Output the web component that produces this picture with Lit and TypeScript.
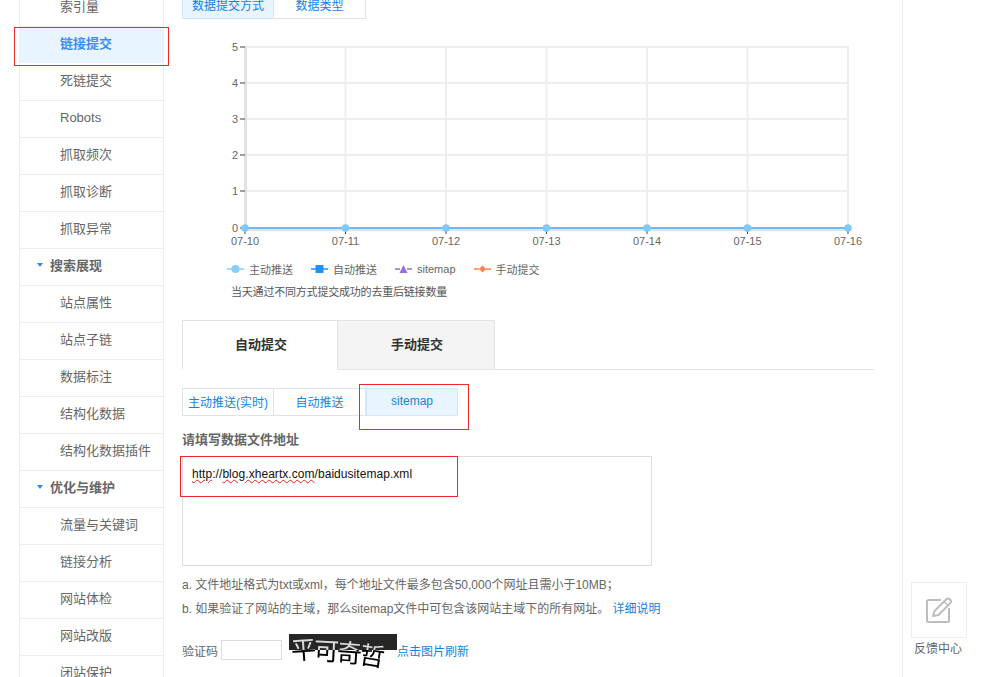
import { LitElement, html, css, svg } from "lit";
import { customElement } from "lit/decorators.js";

type Row = { t: string; kind?: "head" | "active" };
const ROWS: Row[] = [
  { t: "索引量" }, { t: "链接提交", kind: "active" }, { t: "死链提交" }, { t: "Robots" },
  { t: "抓取频次" }, { t: "抓取诊断" }, { t: "抓取异常" }, { t: "搜索展现", kind: "head" },
  { t: "站点属性" }, { t: "站点子链" }, { t: "数据标注" }, { t: "结构化数据" }, { t: "结构化数据插件" },
  { t: "优化与维护", kind: "head" }, { t: "流量与关键词" }, { t: "链接分析" }, { t: "网站体检" },
  { t: "网站改版" }, { t: "闭站保护" },
];
const XS = [245, 345.5, 446, 546.5, 647, 747.5, 848];
const DATES = ["07-10", "07-11", "07-12", "07-13", "07-14", "07-15", "07-16"];
const YS = [47, 83, 119, 155, 191, 228];
const LEGEND = [
  { t: "主动推送", c: "#87cefa", s: "circle" },
  { t: "自动推送", c: "#1e90ff", s: "square" },
  { t: "sitemap", c: "#9370db", s: "triangle" },
  { t: "手动提交", c: "#ff7f50", s: "diamond" },
];

@customElement("app-root")
export class AppRoot extends LitElement {
  static styles = css`
    :host { display: block; width: 982px; height: 677px; overflow: hidden; position: relative; background: #fff;
      font-family: "Liberation Sans", "Noto Sans CJK SC", sans-serif; color: #666; font-size: 12px; }
    .page { display: flex; align-items: flex-start; padding-left: 19px; height: 677px; }
    .side { width: 143px; flex: none; margin-top: -10px; border: solid #eee; border-width: 0 1px; }
    .row { height: 36px; line-height: 34px; border-bottom: 1px solid #eee; padding-left: 40px; font-size: 13px; }
    .row.active { background: #e8f4ff; color: #3f8cf0; font-weight: 700; border-bottom: 1px solid #fff; }
    .row.head { font-weight: 700; display: flex; align-items: center; gap: 7px; padding-left: 17px; padding-bottom: 2px; height: 34px; }
    .caret { width: 0; height: 0; border: 3.5px solid transparent; border-top: 4px solid #2b8cf0; border-bottom: 0; margin-top: -2px; }
    .main { width: 692px; flex: none; margin-left: 18px; display: flex; flex-direction: column; margin-top: -9px; }
    .seg { display: flex; }
    .seg button { width: 92px; height: 28px; padding: 0 0 2px; box-sizing: border-box; border: 1px solid #e3e3e3; border-left-width: 0; background: #fff;
      font: inherit; font-size: 12px; color: #1283e6; }
    .seg button:first-child { border-left-width: 1px; }
    .seg button.on { background: #e8f4ff; border: 1px solid #cfe6fb; }
    .chart { display: block; margin-top: 11px; }
    .legend { display: flex; height: 18px; align-items: center; margin-top: 6px; padding-left: 45px; font-size: 11px; color: #666; }
    .legend .item { display: flex; align-items: center; gap: 5px; margin-right: 18px; }
    .legend svg { display: block; }
    .caption { font-size: 11px; letter-spacing: -0.2px; padding-left: 49px; margin-top: 6px; line-height: 16px; color: #555; }
    .tabs { display: flex; margin-top: 20px; border-bottom: 1px solid #e3e3e3; height: 49px; }
    .tab { width: 157px; box-sizing: border-box; height: 50px; padding: 0 0 4px 2px; border: 1px solid #e3e3e3; border-left-width: 0; background: #f4f4f4;
      font-size: 13px; font-weight: 700; color: #333; display: flex; align-items: center; justify-content: center; }
    .tab.on { width: 156px; background: #fff; border-left-width: 1px; border-bottom-color: #fff; }
    .sub { margin-top: 18px; }
    .label { font-size: 13px; font-weight: 700; margin-top: 16px; line-height: 16px; }
    .area { width: 470px; height: 110px; box-sizing: border-box; margin-top: 8px; border: 1px solid #ddd; padding: 9px 9px; color: #111; font-size: 12px; line-height: 16px; letter-spacing: 0.05px; }
    .sp { text-decoration: underline wavy #e02020 1px; text-underline-offset: 1px; }
    .notes { margin-top: 7px; line-height: 24px; }
    .notes p { margin: 0; }
    a { color: #1283e6; text-decoration: none; }
    .notes a { margin-left: 3px; }
    .verify { display: flex; align-items: flex-start; margin-top: 13px; height: 50px; }
    .verify .vt { margin-top: 9px; line-height: 18px; }
    .code { width: 61px; height: 20px; box-sizing: border-box; border: 1px solid #ddd; margin: 6px 7px 0 3px; }
    .cap { width: 108px; height: 37px; display: flex; align-items: flex-start; padding-left: 2px; box-sizing: border-box; isolation: isolate;
      background: linear-gradient(#262626 16px, #fff 16px); }
    .cap span { display: block; width: 23px; font-size: 25px; line-height: 27px; color: #fff; mix-blend-mode: difference;
      font-family: "Noto Sans CJK SC", sans-serif; text-align: center; }
    .cap .c1 { transform: translateY(1px) rotate(-4deg); }
    .cap .c2 { transform: translateY(2px) rotate(3deg); }
    .cap .c3 { transform: translateY(4px) rotate(4deg); }
    .cap .c4 { transform: translateY(7px) rotate(9deg); }
    .rail { flex: none; margin-left: 28px; width: 79px; height: 677px; box-sizing: border-box; border-left: 1px solid #eee; padding: 582px 0 0 8px; }
    .fb { width: 56px; height: 56px; box-sizing: border-box; border: 1px solid #eee; display: flex; align-items: center; justify-content: center; }
    .fbt { width: 56px; margin-left: -1px; text-align: center; margin-top: 2px; line-height: 18px; }
    .mark { position: absolute; box-sizing: border-box; border: 1px solid #ee2a2a; pointer-events: none; }
    .m1 { left: 14px; top: 27px; width: 155px; height: 39px; }
    .m2 { left: 359px; top: 384px; width: 110px; height: 46px; }
    .m3 { left: 180px; top: 456px; width: 278px; height: 41px; }
  `;

  marker(s: string, c: string, x: number, y: number, r: number) {
    if (s === "circle") return svg`<circle cx=${x} cy=${y} r=${r} fill=${c}/>`;
    if (s === "square") return svg`<rect x=${x - r} y=${y - r} width=${2 * r} height=${2 * r} fill=${c}/>`;
    if (s === "triangle") return svg`<path d="M${x} ${y - r}L${x + r} ${y + r}H${x - r}Z" fill=${c}/>`;
    return svg`<path d="M${x} ${y - r}L${x + r} ${y}L${x} ${y + r}L${x - r} ${y}Z" fill=${c}/>`;
  }

  chart() {
    return html`<svg class="chart" width="692" height="224" viewBox="182 30 692 224">
      ${XS.slice(1).map((x) => svg`<line x1=${x} x2=${x} y1="47" y2="228" stroke="#eee" stroke-width="2"/>`)}
      ${YS.slice(0, 5).map((y) => svg`<line x1="245" x2="849" y1=${y} y2=${y} stroke="#eee" stroke-width="2"/>`)}
      <line x1="245.5" x2="245.5" y1="46" y2="231" stroke="#e2e2e2" stroke-width="3"/>
      <line x1="245" x2="849" y1="230" y2="230" stroke="#e4e4e4" stroke-width="2.5"/>
      ${YS.map((y, i) => svg`
        <line x1="240" x2="245" y1=${y} y2=${y} stroke="#444"/>
        <text x="238" y=${y + 4} text-anchor="end" font-size="11" fill="#666">${5 - i}</text>`)}
      ${XS.map((x, i) => svg`
        <line x1=${x} x2=${x} y1="229" y2="234" stroke="#444"/>
        <text x=${x} y="245" text-anchor="middle" font-size="11" fill="#666">${DATES[i]}</text>`)}
      <line x1="245" x2="848" y1="228" y2="228" stroke="#6db8f5" stroke-width="2"/>
      ${XS.map((x) => svg`<circle cx=${x} cy="228" r="3.8" fill="#7ccbfb"/>`)}
    </svg>`;
  }

  render() {
    return html`<div class="page">
        <nav class="side">
          ${ROWS.map((r) => html`<div class="row ${r.kind ?? ""}">
            ${r.kind === "head" ? html`<i class="caret"></i>` : ""}<span>${r.t}</span></div>`)}
        </nav>
        <main class="main">
          <div class="seg"><button class="on">数据提交方式</button><button>数据类型</button></div>
          ${this.chart()}
          <div class="legend">
            ${LEGEND.map((l) => html`<div class="item">
              <svg width="17" height="12" viewBox="0 0 17 12">
                <line x1="0" x2="17" y1="6" y2="6" stroke=${l.c} stroke-width="1.5" stroke-dasharray="5 7 5"/>
                ${this.marker(l.s, l.c, 8.5, 6, l.s === "diamond" ? 3.5 : 4)}
              </svg><span>${l.t}</span></div>`)}
          </div>
          <div class="caption">当天通过不同方式提交成功的去重后链接数量</div>
          <div class="tabs"><div class="tab on">自动提交</div><div class="tab">手动提交</div></div>
          <div class="seg sub"><button>主动推送(实时)</button><button>自动推送</button><button class="on">sitemap</button></div>
          <div class="label">请填写数据文件地址</div>
          <div class="area"><span class="sp">http</span>://<span class="sp">blog.xheartx.com</span>/baidusitemap.xml</div>
          <div class="notes">
            <p>a. 文件地址格式为txt或xml，每个地址文件最多包含50,000个网址且需小于10MB；</p>
            <p>b. 如果验证了网站的主域，那么sitemap文件中可包含该网站主域下的所有网址。<a>详细说明</a></p>
          </div>
          <div class="verify">
            <span class="vt">验证码</span><div class="code"></div>
            <div class="cap"><span class="c1">平</span><span class="c2">可</span><span class="c3">奇</span><span class="c4">哲</span></div>
            <a class="vt">点击图片刷新</a>
          </div>
        </main>
        <aside class="rail">
          <div class="fb">
            <svg width="28" height="28" viewBox="0 0 28 28" fill="none">
              <path d="M16 4H3.500A1.500 1.500 0 0 0 2 5.500V24.500A1.500 1.500 0 0 0 3.500 26H22.500A1.500 1.500 0 0 0 24 24.500V12" stroke="#bdbdbd" stroke-width="2"/>
              <path d="M8 20L9.500 15L21 3.500A2 2 0 0 1 25 7.500L13.500 19Z" stroke="#bdbdbd" stroke-width="2" stroke-linejoin="round"/>
              <path d="M19 5.500L23 9.500" stroke="#bdbdbd" stroke-width="1.500"/>
            </svg>
          </div>
          <div class="fbt">反馈中心</div>
        </aside>
      </div>
      <div class="mark m1"></div><div class="mark m2"></div><div class="mark m3"></div>`;
  }
}
